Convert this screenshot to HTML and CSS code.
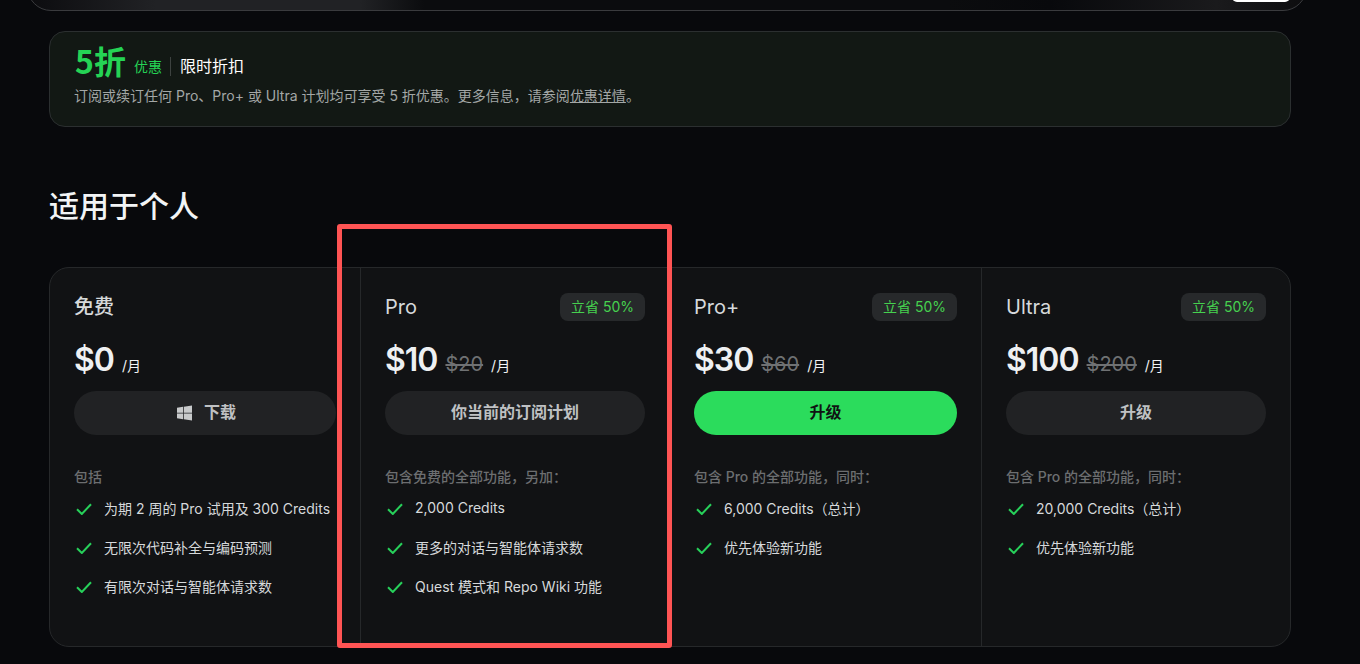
FILE: index.html
```html
<!DOCTYPE html>
<html lang="zh-CN">
<head>
    <meta charset="UTF-8">
    <meta name="viewport" content="width=device-width, initial-scale=1.0">
    <title>定价</title>
    <link rel="stylesheet" href="styles.css">
</head>
<body>
    <div class="page">
        <div class="hero">
            <span class="hero-btn"></span>
        </div>

        <div class="promo">
            <div class="promo-head">
                <span class="promo-big">5折</span>
                <span class="promo-small">优惠</span>
                <span class="promo-title">限时折扣</span>
            </div>
            <p class="promo-text">订阅或续订任何 Pro、Pro+ 或 Ultra 计划均可享受 5 折优惠。更多信息，请参阅<a href="#">优惠详情</a>。</p>
        </div>

        <h2 class="section-title">适用于个人</h2>

        <div class="plans">
            <div class="plan plan-free">
                <div class="plan-head"><h3 class="plan-name plan-name-cn">免费</h3></div>
                <div class="price"><strong>$0</strong><span class="per">/月</span></div>
                <button class="btn">
                    <svg class="win" viewBox="0 0 16 16"><path d="M0 2.3 6.5 1.4V7.6H0ZM7.3 1.3 16 0V7.6H7.3ZM0 8.4H6.5V14.6L0 13.7ZM7.3 8.4H16V16L7.3 14.7Z"/></svg>
                    下载
                </button>
                <div class="includes">包括</div>
                <ul class="features">
                    <li><svg class="check" viewBox="0 0 16 12"><path d="M1 6.2 5.8 11 15 1.2"/></svg>为期 2 周的 Pro 试用及 300 Credits</li>
                    <li><svg class="check" viewBox="0 0 16 12"><path d="M1 6.2 5.8 11 15 1.2"/></svg>无限次代码补全与编码预测</li>
                    <li><svg class="check" viewBox="0 0 16 12"><path d="M1 6.2 5.8 11 15 1.2"/></svg>有限次对话与智能体请求数</li>
                </ul>
            </div>

            <div class="plan plan-pro">
                <div class="plan-head"><h3 class="plan-name">Pro</h3><span class="badge">立省 50%</span></div>
                <div class="price"><strong>$10</strong><s>$20</s><span class="per">/月</span></div>
                <button class="btn">你当前的订阅计划</button>
                <div class="includes">包含免费的全部功能，另加：</div>
                <ul class="features">
                    <li><svg class="check" viewBox="0 0 16 12"><path d="M1 6.2 5.8 11 15 1.2"/></svg>2,000 Credits</li>
                    <li><svg class="check" viewBox="0 0 16 12"><path d="M1 6.2 5.8 11 15 1.2"/></svg>更多的对话与智能体请求数</li>
                    <li><svg class="check" viewBox="0 0 16 12"><path d="M1 6.2 5.8 11 15 1.2"/></svg>Quest 模式和 Repo Wiki 功能</li>
                </ul>
            </div>

            <div class="plan plan-plus">
                <div class="plan-head"><h3 class="plan-name">Pro+</h3><span class="badge">立省 50%</span></div>
                <div class="price"><strong>$30</strong><s>$60</s><span class="per">/月</span></div>
                <button class="btn btn-green">升级</button>
                <div class="includes">包含 Pro 的全部功能，同时：</div>
                <ul class="features">
                    <li><svg class="check" viewBox="0 0 16 12"><path d="M1 6.2 5.8 11 15 1.2"/></svg>6,000 Credits（总计）</li>
                    <li><svg class="check" viewBox="0 0 16 12"><path d="M1 6.2 5.8 11 15 1.2"/></svg>优先体验新功能</li>
                </ul>
            </div>

            <div class="plan plan-ultra">
                <div class="plan-head"><h3 class="plan-name">Ultra</h3><span class="badge">立省 50%</span></div>
                <div class="price"><strong>$100</strong><s>$200</s><span class="per">/月</span></div>
                <button class="btn">升级</button>
                <div class="includes">包含 Pro 的全部功能，同时：</div>
                <ul class="features">
                    <li><svg class="check" viewBox="0 0 16 12"><path d="M1 6.2 5.8 11 15 1.2"/></svg>20,000 Credits（总计）</li>
                    <li><svg class="check" viewBox="0 0 16 12"><path d="M1 6.2 5.8 11 15 1.2"/></svg>优先体验新功能</li>
                </ul>
            </div>

            <div class="highlight"></div>
        </div>
    </div>
</body>
</html>
```

FILE: styles.css
```css
html, body {
    margin: 0;
    height: 100%;
    overflow: hidden;
}

body {
    font-family: Inter, "Noto Sans CJK SC", sans-serif;
    background-color: #08090c;
    color: #d6d9db;
}

.page {
    padding: 0 69px 0 49px;
}

.hero {
    display: flex;
    justify-content: flex-end;
    align-items: flex-end;
    height: 51px;
    margin: -40px -16px 0 -22px;
    padding: 0 16px 8px 0;
    box-sizing: border-box;
    border: 1px solid #3a3b3e;
    border-radius: 24px;
    background: linear-gradient(90deg, #0c0c0f 0%, #212225 10%, #212225 26%, #0b0c0e 31%, #0b0c0e 72%, #08090c 80%, #1a1a1c 93%, #0d0d0f 100%);
}

.hero-btn {
    width: 58px;
    height: 30px;
    border-radius: 5px;
    background-color: #fff;
}

.promo {
    height: 96px;
    margin-top: 20px;
    padding: 12px 24px 0;
    box-sizing: border-box;
    border: 1px solid #2b2f30;
    border-radius: 16px;
    background-color: #121814;
}

.promo-head {
    display: flex;
    align-items: flex-end;
    height: 36px;
}

.promo-big {
    margin: 0 0 2px 1px;
    font-family: "Noto Sans CJK SC", sans-serif;
    font-size: 32px;
    line-height: 36px;
    font-weight: 700;
    color: #25d355;
}

.promo-small {
    margin: 0 0 3px 8px;
    font-size: 14px;
    line-height: 20px;
    color: #25d355;
}

.promo-title {
    margin: 0 0 4px 8px;
    padding-left: 9px;
    border-left: 1px solid #3d4240;
    font-size: 16px;
    line-height: 19px;
    color: #fff;
}

.promo-text {
    margin: 5px 0 0;
    font-size: 14px;
    line-height: 22px;
    color: #a3a7a6;
}

.promo-text a {
    color: #a3a7a6;
}

.section-title {
    margin: 59px 0 0;
    font-size: 30px;
    line-height: 40px;
    font-weight: 500;
    color: #f2f4f5;
}

.plans {
    position: relative;
    display: grid;
    grid-template-columns: 311px 309px 312px 308px;
    height: 380px;
    margin-top: 41px;
    box-sizing: border-box;
    border: 1px solid #26282a;
    border-radius: 20px;
    background-color: #111214;
}

.plan {
    padding: 25px 24px 0;
    box-sizing: border-box;
    border-right: 1px solid #26282a;
}

.plan-ultra {
    border-right: 0;
}

.plan-head {
    display: flex;
    justify-content: space-between;
    align-items: center;
    height: 28px;
}

.plan-name {
    margin: 0;
    font-size: 20px;
    font-weight: 400;
    color: #d6d9db;
}

.plan-name-cn {
    font-family: "Noto Sans CJK SC", sans-serif;
    font-weight: 500;
    line-height: 26px;
    margin-bottom: 2px;
}

.badge {
    width: 85px;
    height: 28px;
    border-radius: 8px;
    background-color: #27292b;
    font-size: 14px;
    line-height: 28px;
    text-align: center;
    color: #46d14f;
}

.price {
    display: flex;
    align-items: baseline;
    height: 44px;
    margin-top: 17px;
}

.price strong {
    font-size: 32px;
    line-height: 44px;
    font-weight: 600;
    letter-spacing: -1px;
    color: #eef0f2;
}

.price s {
    margin-left: 8px;
    font-size: 20px;
    color: #6f7173;
}

.per {
    margin-left: 8px;
    font-size: 14px;
    color: #f2f4f5;
}

.btn {
    display: flex;
    justify-content: center;
    align-items: center;
    gap: 12px;
    width: 100%;
    height: 44px;
    margin-top: 9px;
    padding: 0 0 5px;
    border: 0;
    border-radius: 22px;
    background-color: #212224;
    font-family: inherit;
    font-size: 16px;
    font-weight: 700;
    color: #bfc1c3;
}

.btn-green {
    background-color: #2bdc5c;
    color: #101213;
}

.win {
    width: 15px;
    height: 16px;
    margin: 4px 0 0 3px;
    fill: #c8cacb;
}

.includes {
    margin-top: 32px;
    font-size: 14px;
    line-height: 20px;
    font-weight: 500;
    color: #6c6e70;
}

.features {
    list-style: none;
    margin: 2px 0 0;
    padding: 0;
}

.features li {
    display: flex;
    align-items: center;
    gap: 12px;
    height: 39px;
    padding: 0 0 2px 2px;
    box-sizing: border-box;
    font-size: 14px;
    white-space: nowrap;
    color: #d6d9db;
}

.check {
    flex: none;
    width: 16px;
    height: 12px;
    margin-top: 2px;
    fill: none;
    stroke: #27d05a;
    stroke-width: 2;
}

/* red annotation box drawn over the Pro column */
.highlight {
    position: absolute;
    left: 287px;
    top: -44px;
    width: 335px;
    height: 424px;
    box-sizing: border-box;
    border: 5px solid #ff5454;
    border-radius: 3px;
}
```
